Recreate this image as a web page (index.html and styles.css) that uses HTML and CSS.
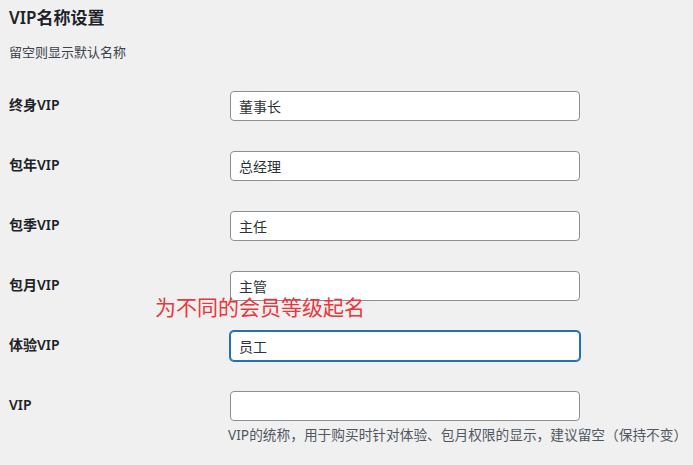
FILE: index.html
```html
<!DOCTYPE html>
<html lang="zh-CN">
<head>
    <meta charset="UTF-8">
    <meta name="viewport" content="width=device-width, initial-scale=1.0">
    <title>VIP名称设置</title>
    <link rel="stylesheet" href="styles.css">
</head>
<body>

    <div class="wrap">
        <h2 class="title">VIP名称设置</h2>
        <p class="intro">留空则显示默认名称</p>

        <div class="form-table">
            <div class="row">
                <label class="label" for="vip-life">终身VIP</label>
                <div class="field"><input id="vip-life" type="text" value="董事长"></div>
            </div>
            <div class="row">
                <label class="label" for="vip-year">包年VIP</label>
                <div class="field"><input id="vip-year" type="text" value="总经理"></div>
            </div>
            <div class="row">
                <label class="label" for="vip-season">包季VIP</label>
                <div class="field"><input id="vip-season" type="text" value="主任"></div>
            </div>
            <div class="row">
                <label class="label" for="vip-month">包月VIP</label>
                <div class="field"><input id="vip-month" type="text" value="主管"></div>
            </div>
            <div class="row">
                <label class="label" for="vip-trial">体验VIP</label>
                <div class="field"><input id="vip-trial" class="focused" type="text" value="员工"></div>
            </div>
            <div class="row">
                <label class="label" for="vip-all">VIP</label>
                <div class="field">
                    <input id="vip-all" type="text" value="">
                    <p class="description">VIP的统称，用于购买时针对体验、包月权限的显示，建议留空（保持不变）</p>
                </div>
            </div>

            <!-- annotation added on the screenshot -->
            <div class="note">为不同的会员等级起名</div>
        </div>
    </div>

</body>
</html>
```

FILE: styles.css
```css
body {
    margin: 0;
    background-color: #f0f0f1;
    color: #1d2327;
    font-family: "Noto Sans", "Noto Sans CJK SC", sans-serif;
    font-size: 13px;
}

.wrap {
    padding: 0 0 20px 9px;
}

.title {
    font-size: 17px;
    font-weight: 600;
    line-height: 20px;
    margin: 8px 0 0;
}

.intro {
    font-size: 13px;
    line-height: 20px;
    margin: 14px 0 0;
    color: #3c434a;
}

.form-table {
    position: relative;
    margin-top: 14px;
}

.row {
    display: flex;
    align-items: flex-start;
    min-height: 60px;
}

.label {
    width: 200px;
    padding: 20px 10px 0 0;
    font-size: 14px;
    font-weight: 600;
    line-height: 18px;
}

.field {
    padding: 15px 0 0 11px;
}

input {
    box-sizing: border-box;
    width: 350px;
    height: 30px;
    padding: 0 8px;
    border: 1px solid #8c8f94;
    border-radius: 4px;
    background-color: #fff;
    color: #2c3338;
    font-family: inherit;
    font-size: 14px;
    outline: none;
}

input.focused {
    border-color: #2271b1;
    box-shadow: 0 0 0 1px #2271b1;
}

.description {
    margin: 4px 0 0 -2px;
    font-size: 13.7px;
    line-height: 20px;
    color: #50575e;
    white-space: nowrap;
}

.note {
    position: absolute;
    left: 146px;
    top: 218px;
    color: #e8383d;
    font-size: 21px;
    line-height: 26px;
}
```
